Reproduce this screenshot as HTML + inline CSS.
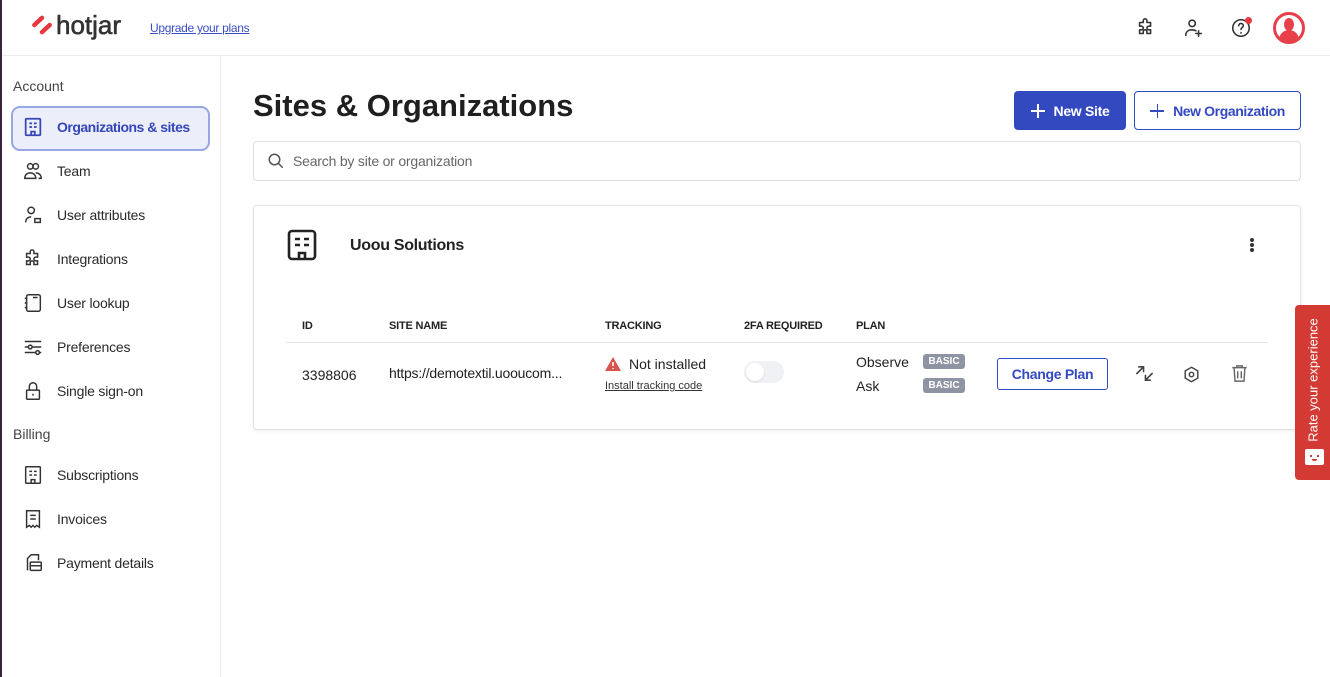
<!DOCTYPE html>
<html><head><meta charset="utf-8"><style>
*{box-sizing:border-box;margin:0;padding:0}
body{width:1330px;height:677px;overflow:hidden;background:#fff;font-family:"Liberation Sans",sans-serif;color:#222;position:relative}
.a{position:absolute}
.nav{position:absolute;left:22px;font-size:14px;color:#2a2a2a;display:flex;align-items:center;letter-spacing:-0.2px;white-space:nowrap}
.nav svg{width:22px;height:22px;flex-shrink:0;margin-right:13px;margin-top:-3px;margin-bottom:-3px;fill:none;stroke:#333;stroke-width:1.6}
.hdr{font-size:11px;font-weight:bold;color:#222;letter-spacing:-0.2px}
.badge{position:absolute;background:#8e94a3;color:#fff;font-size:10px;font-weight:bold;border-radius:3px;padding:2px 4px;width:42px;text-align:center}
.ic{fill:none;stroke:#333;stroke-width:1.7;stroke-linecap:round;stroke-linejoin:round}
.pl{display:inline-block;position:relative;width:14px;height:14px;margin-right:9px}
.pl:before,.pl:after{content:"";position:absolute;background:currentColor}
.pl:before{left:0;top:6.5px;width:14px;height:1.5px}
.pl:after{left:6.5px;top:0;width:1.5px;height:14px}
</style></head><body>
<div class="a" style="left:0;top:0;width:2px;height:677px;background:#3b2340"></div>
<!-- header -->
<svg class="a" style="left:31px;top:14px" width="22" height="22" viewBox="0 0 20 20"><path d="M3 10 L10 3.5 M10 16.5 L17 10" stroke="#e8373e" stroke-width="4" stroke-linecap="round"/></svg>
<div class="a" style="left:56px;top:10px;font-size:26px;color:#333;-webkit-text-stroke:0.6px #333">hotjar</div>
<div class="a" style="left:150px;top:21px;font-size:12px;color:#3a4fc2;text-decoration:underline;letter-spacing:-0.3px">Upgrade your plans</div>
<svg class="a ic" style="left:1135px;top:17px" width="22" height="22" viewBox="0 0 24 24"><path d="M9 4a2 2 0 014 0v2h4v4h-2a2 2 0 000 4h2v4h-4v-2a2 2 0 00-4 0v2H5v-4h2a2 2 0 000-4H5V6h4z"/></svg>
<svg class="a ic" style="left:1183px;top:17px" width="22" height="22" viewBox="0 0 24 24"><circle cx="10" cy="7" r="3.5"/><path d="M3 20c0-4 3-6 7-6 2 0 3 .5 4 1M17 15v6M14 18h6"/></svg>
<svg class="a ic" style="left:1230px;top:17px" width="22" height="22" viewBox="0 0 24 24"><circle cx="12" cy="12" r="9"/><path d="M9.5 9.5a2.5 2.5 0 115 0c0 2-2.5 2-2.5 4M12 17v.5"/></svg>
<div class="a" style="left:1245px;top:17px;width:7px;height:7px;border-radius:50%;background:#e8373e"></div>
<div class="a" style="left:1273px;top:12px;width:32px;height:32px;border-radius:50%;background:#e8404a;overflow:hidden;border:2px solid #e8404a"><div style="position:absolute;left:1px;top:1px;width:26px;height:26px;border-radius:50%;background:#fff"></div><div style="position:absolute;left:9px;top:4px;width:10px;height:13px;border-radius:50%;background:#e8404a"></div><div style="position:absolute;left:4px;top:16px;width:20px;height:14px;border-radius:10px 10px 0 0;background:#e8404a"></div></div>
<div class="a" style="left:2px;top:55px;width:1328px;height:1px;background:#ececec"></div>
<div class="a" style="left:220px;top:56px;width:1px;height:621px;background:#ececec"></div>
<!-- sidebar -->
<div class="a" style="left:13px;top:78px;font-size:14px;color:#444">Account</div>
<div class="a" style="left:11px;top:106px;width:199px;height:45px;border:2px solid #98a6e4;border-radius:9px;background:#eceffa"></div>
<div class="nav" style="top:119px;color:#3546b8;font-weight:bold;letter-spacing:-0.5px"><svg viewBox="0 0 24 24" style="stroke:#3546b8;stroke-width:1.9"><rect x="4" y="3" width="16" height="18" rx="1"/><path d="M8 8h3M13 8h3M8 12h3M13 12h3M10 21v-4h4v4"/></svg>Organizations &amp; sites</div>
<div class="nav" style="top:163px"><svg viewBox="0 0 24 24"><circle cx="9" cy="7" r="3"/><circle cx="15" cy="7" r="3"/><path d="M3 20c0-4 3-6 6-6s6 2 6 6zM15 14c3 0 6 2 6 6h-3"/></svg>Team</div>
<div class="nav" style="top:207px"><svg viewBox="0 0 24 24"><circle cx="10" cy="7" r="3.5"/><path d="M4 20c0-4 3-6 6-6M14 16h6v4h-6z"/></svg>User attributes</div>
<div class="nav" style="top:251px"><svg viewBox="0 0 24 24"><path d="M9 4a2 2 0 014 0v2h4v4h-2a2 2 0 000 4h2v4h-4v-2a2 2 0 00-4 0v2H5v-4h2a2 2 0 000-4H5V6h4z"/></svg>Integrations</div>
<div class="nav" style="top:295px"><svg viewBox="0 0 24 24"><rect x="5" y="3" width="15" height="18" rx="2"/><path d="M3 7h3M3 12h3M3 17h3M12 6h5"/></svg>User lookup</div>
<div class="nav" style="top:339px"><svg viewBox="0 0 24 24"><path d="M3 6h18M3 12h18M3 18h18"/><circle cx="9" cy="12" r="2" fill="#fff"/><circle cx="17" cy="18" r="2" fill="#fff"/></svg>Preferences</div>
<div class="nav" style="top:383px"><svg viewBox="0 0 24 24"><rect x="5" y="11" width="14" height="10" rx="1"/><path d="M8 11V7a4 4 0 018 0v4M12 15v2"/></svg>Single sign-on</div>
<div class="a" style="left:13px;top:426px;font-size:14px;color:#444">Billing</div>
<div class="nav" style="top:467px"><svg viewBox="0 0 24 24"><rect x="4" y="3" width="16" height="18" rx="1"/><path d="M8 8h3M13 8h3M8 12h3M13 12h3M10 21v-4h4v4"/></svg>Subscriptions</div>
<div class="nav" style="top:511px"><svg viewBox="0 0 24 24"><path d="M5 3h14v18l-3-2-2 2-2-2-2 2-2-2-3 2z"/><path d="M9 8h6M9 12h6"/></svg>Invoices</div>
<div class="nav" style="top:555px"><svg viewBox="0 0 24 24"><path d="M6 20V7l4-4h8v6"/><rect x="9" y="11" width="12" height="9" rx="1"/><path d="M9 15h12"/></svg>Payment details</div>
<!-- main -->
<div class="a" style="left:253px;top:88px;font-size:31px;font-weight:bold;color:#1f1f1f">Sites &amp; Organizations</div>
<div class="a" style="left:1014px;top:91px;width:112px;height:39px;background:#3349c0;border-radius:4px;color:#fff;font-size:14px;font-weight:bold;display:flex;align-items:center;justify-content:center;letter-spacing:-0.3px"><span class="pl"></span>New Site</div>
<div class="a" style="left:1134px;top:91px;width:167px;height:39px;border:1px solid #3349c0;border-radius:4px;color:#3349c0;font-size:14px;font-weight:bold;display:flex;align-items:center;justify-content:center;letter-spacing:-0.4px"><span class="pl"></span>New Organization</div>
<div class="a" style="left:253px;top:141px;width:1048px;height:40px;border:1px solid #dedede;border-radius:4px"></div>
<svg class="a" style="left:267px;top:152px" width="18" height="18" viewBox="0 0 24 24" fill="none" stroke="#555" stroke-width="2"><circle cx="10" cy="10" r="7"/><path d="M15 15l6 6"/></svg>
<div class="a" style="left:293px;top:153px;font-size:14px;color:#666;letter-spacing:-0.2px">Search by site or organization</div>
<div class="a" style="left:253px;top:205px;width:1048px;height:225px;border:1px solid #e3e3e3;border-radius:4px;box-shadow:0 1px 3px rgba(0,0,0,.08)"></div>
<svg class="a" style="left:287px;top:229px" width="30" height="32" viewBox="0 0 30 32" fill="none" stroke="#222" stroke-width="2.6"><rect x="2" y="2" width="26" height="28" rx="3"/><path d="M8 10h5M17 10h5M8 16h5M17 16h5M12 30v-6h6v6"/></svg>
<div class="a" style="left:350px;top:237px;font-size:16px;font-weight:bold;color:#222;letter-spacing:-0.3px">Uoou Solutions</div>
<div class="a" style="left:1250px;top:238px;width:4px;height:4px;border-radius:50%;background:#333;box-shadow:0 5px 0 #333,0 10px 0 #333"></div>
<div class="a hdr" style="left:302px;top:320px">ID</div>
<div class="a hdr" style="left:389px;top:320px">SITE NAME</div>
<div class="a hdr" style="left:605px;top:320px">TRACKING</div>
<div class="a hdr" style="left:744px;top:320px">2FA REQUIRED</div>
<div class="a hdr" style="left:856px;top:320px">PLAN</div>
<div class="a" style="left:286px;top:342px;width:982px;height:1px;background:#e3e3e6"></div>
<div class="a" style="left:302px;top:367px;font-size:14px">3398806</div>
<div class="a" style="left:389px;top:365px;font-size:14px;letter-spacing:-0.2px">https://demotextil.uooucom...</div>
<svg class="a" style="left:605px;top:357px" width="16" height="14" viewBox="0 0 16 14"><path d="M8 0L16 14H0z" fill="#d9534f"/><path d="M8 5v4M8 11v1" stroke="#fff" stroke-width="1.6"/></svg>
<div class="a" style="left:629px;top:356px;font-size:14px">Not installed</div>
<div class="a" style="left:605px;top:380px;font-size:11px;color:#333;text-decoration:underline">Install tracking code</div>
<div class="a" style="left:744px;top:361px;width:40px;height:22px;border-radius:11px;background:#f0f1f4"><div style="position:absolute;left:2px;top:2px;width:18px;height:18px;border-radius:50%;background:#fff;box-shadow:0 1px 2px rgba(0,0,0,.1)"></div></div>
<div class="a" style="left:856px;top:354px;font-size:14px">Observe</div>
<div class="a" style="left:856px;top:378px;font-size:14px">Ask</div>
<div class="badge" style="left:923px;top:354px">BASIC</div>
<div class="badge" style="left:923px;top:378px">BASIC</div>
<div class="a" style="left:997px;top:358px;width:111px;height:32px;border:1px solid #3349c0;border-radius:3px;color:#3349c0;font-size:14px;font-weight:bold;display:flex;align-items:center;justify-content:center;letter-spacing:-0.3px">Change Plan</div>
<svg class="a" style="left:1135px;top:364px" width="19" height="19" viewBox="0 0 20 20" fill="none" stroke="#444" stroke-width="1.7" stroke-linecap="round"><path d="M2 10L9 3M4 3h5v5M18 10l-7 7M11 12v5h5"/></svg>
<svg class="a" style="left:1183px;top:366px" width="17" height="17" viewBox="0 0 20 20" fill="none" stroke="#444" stroke-width="1.7"><path d="M10 1.5l7.4 4.25v8.5L10 18.5l-7.4-4.25v-8.5z"/><circle cx="10" cy="10" r="2.6"/></svg>
<svg class="a" style="left:1231px;top:364px" width="17" height="18" viewBox="0 0 18 20" fill="none" stroke="#666" stroke-width="1.6"><path d="M1 4h16M6 4V2h6v2M3 4l1 15h10l1-15M7 8v8M11 8v8"/></svg>
<div class="a" style="left:1295px;top:305px;width:35px;height:175px;background:#d23a33;border-radius:4px 0 0 4px"></div>
<div class="a" style="left:1313px;top:380px;transform:translate(-50%,-50%) rotate(-90deg);white-space:nowrap;color:#fff;font-size:13px">Rate your experience</div>
<div class="a" style="left:1305px;top:449px;width:19px;height:16px;background:#fff;border-radius:2px"><div style="position:absolute;left:5px;top:6px;width:2px;height:2px;background:#d23a33;box-shadow:7px 0 0 #d23a33"></div><div style="position:absolute;left:7px;top:10px;width:5px;height:2px;border-radius:0 0 3px 3px;background:#d23a33"></div></div>
</body></html>
